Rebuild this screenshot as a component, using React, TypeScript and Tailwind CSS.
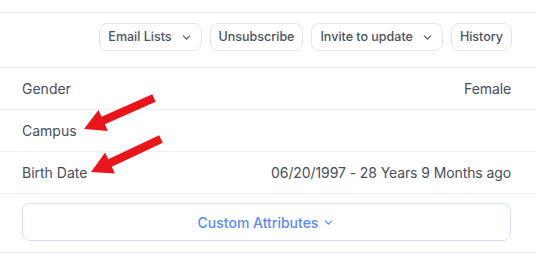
import { ChevronDown } from 'lucide-react';

type Pt = [number, number];

// red annotation arrow, drawn as one polygon from tail to tip
function arrowPoints(tail: Pt, tip: Pt, shaft = 4.2, headLen = 21, headHalf = 11.5) {
  const dx = tip[0] - tail[0];
  const dy = tip[1] - tail[1];
  const len = Math.hypot(dx, dy);
  const ux = dx / len;
  const uy = dy / len;
  const nx = -uy;
  const ny = ux;
  const bx = tip[0] - ux * headLen;
  const by = tip[1] - uy * headLen;
  const pts: Pt[] = [
    [tail[0] + nx * shaft, tail[1] + ny * shaft],
    [bx + nx * shaft, by + ny * shaft],
    [bx + nx * headHalf, by + ny * headHalf],
    tip,
    [bx - nx * headHalf, by - ny * headHalf],
    [bx - nx * shaft, by - ny * shaft],
    [tail[0] - nx * shaft, tail[1] - ny * shaft],
  ];
  return pts.map((p) => `${p[0].toFixed(1)},${p[1].toFixed(1)}`).join(' ');
}

function ActionButton({ label, menu }: { label: string; menu?: boolean }) {
  return (
    <button className="h-[28px] px-[8px] flex items-center gap-[8px] rounded-lg border border-[#e3e5e9] bg-white text-[12.5px] font-medium text-[#4b5261]">
      <span>{label}</span>
      {menu && <ChevronDown className="w-[13px] h-[13px] text-[#4b5261]" strokeWidth={2} />}
    </button>
  );
}

const rows = [
  { label: 'Gender', value: 'Female' },
  { label: 'Campus', value: '' },
  { label: 'Birth Date', value: '06/20/1997 - 28 Years 9 Months ago' },
];

export default function App() {
  return (
    <div
      className="relative w-[536px] h-[256px] bg-white overflow-hidden"
      style={{ fontFamily: 'Inter, "Noto Sans", sans-serif' }}
    >
      <div className="h-[13px] border-b border-[#f0f1f3]" />

      {/* actions */}
      <div className="h-[55px] pt-[10px] pr-[24px] flex justify-end items-start gap-[8px] border-b border-[#eef0f3]">
        <ActionButton label="Email Lists" menu />
        <ActionButton label="Unsubscribe" />
        <ActionButton label="Invite to update" menu />
        <ActionButton label="History" />
      </div>

      {rows.map((row) => (
        <div
          key={row.label}
          className="h-[42px] pl-[22px] pr-[25px] flex items-center justify-between border-b border-[#eef0f3] text-[14px] text-[#474d5b]"
        >
          <span>{row.label}</span>
          <span className="tracking-[-0.1px]">{row.value}</span>
        </div>
      ))}

      <div className="pt-[9px] pl-[22px] pr-[25px] pb-[11px] border-b border-[#f0f1f3]">
        <button className="w-full h-[38px] rounded-lg border border-[#d5def3] flex items-center justify-center gap-[4px] text-[14px] font-medium text-[#5a8bea]">
          <span>Custom Attributes</span>
          <ChevronDown className="w-[13px] h-[13px]" strokeWidth={2.2} />
        </button>
      </div>

      {/* annotation overlay */}
      <svg className="absolute inset-0 pointer-events-none" width="536" height="256">
        <polygon points={arrowPoints([154, 98], [84, 129])} fill="#e8161b" />
        <polygon points={arrowPoints([161, 139], [91, 172])} fill="#e8161b" />
      </svg>
    </div>
  );
}
